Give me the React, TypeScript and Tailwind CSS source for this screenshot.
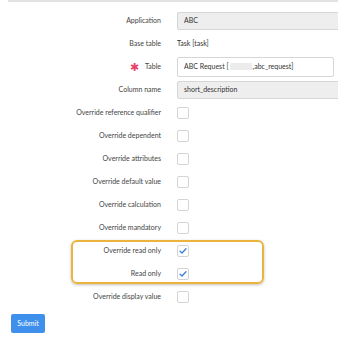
const font = { fontFamily: 'Lato, "Open Sans", sans-serif' };

const checkRows: { label: string; checked: boolean }[] = [
  { label: 'Override reference qualifier', checked: false },
  { label: 'Override dependent', checked: false },
  { label: 'Override attributes', checked: false },
  { label: 'Override default value', checked: false },
  { label: 'Override calculation', checked: false },
  { label: 'Override mandatory', checked: false },
  { label: 'Override read only', checked: true },
  { label: 'Read only', checked: true },
  { label: 'Override display value', checked: false },
];

function Row({ label, children, required }: { label: string; children: React.ReactNode; required?: boolean }) {
  return (
    <div className="flex h-[23px] items-center">
      <div className="flex w-[161px] shrink-0 items-center justify-end gap-[6px] text-[7px] text-[#444]">
        {required && <span className="text-[11px] leading-none text-[#e8416b]">✱</span>}
        <span>{label}</span>
      </div>
      <div className="ml-[16px] flex min-w-0 flex-1 items-center">{children}</div>
    </div>
  );
}

function Box({ checked }: { checked: boolean }) {
  return (
    <div className="flex h-[12px] w-[12px] items-center justify-center rounded-[2px] border border-[#d4d4d4] bg-white">
      {checked && (
        <svg width="8" height="8" viewBox="0 0 8 8" fill="none">
          <polyline points="1,4.2 3,6 7,1.8" stroke="#3b7fd8" strokeWidth="1.3" strokeLinecap="round" strokeLinejoin="round" />
        </svg>
      )}
    </div>
  );
}

export default function App() {
  return (
    <div className="relative h-[338px] w-[338px] overflow-hidden bg-white" style={font}>
      <div className="ml-2 h-[2px] bg-[#e2e2e2]" />
      <div className="pt-[7px]">
        <Row label="Application">
          <div className="flex h-[18px] w-[180px] shrink-0 items-center rounded-[2px] border border-[#d6d6d6] bg-[#eeeeee] px-[6px] text-[7px] text-[#333]">
            ABC
          </div>
        </Row>
        <Row label="Base table">
          <span className="text-[7px] text-[#333]">Task [task]</span>
        </Row>
        <Row label="Table" required>
          <div className="flex h-[20px] w-[157px] shrink-0 items-center rounded-[2px] border border-[#d6d6d6] bg-white px-[6px] text-[7px] text-[#333]">
            ABC Request [<span className="mx-[1px] inline-block h-[7px] w-[22px] bg-[#ececec]" />,abc_request]
          </div>
        </Row>
        <Row label="Column name">
          <div className="flex h-[18px] w-[180px] shrink-0 items-center rounded-[2px] border border-[#d6d6d6] bg-[#eeeeee] px-[6px] text-[7px] text-[#333]">
            short_description
          </div>
        </Row>
        {checkRows.map((r) => (
          <Row key={r.label} label={r.label}>
            <Box checked={r.checked} />
          </Row>
        ))}
      </div>
      <button className="ml-[11px] mt-[5px] h-[19px] w-[34px] rounded-[2px] bg-[#3f8fec] text-[7px] text-white">
        Submit
      </button>
      {/* highlight annotation */}
      <div className="absolute left-[71px] top-[240px] h-[44px] w-[193px] rounded-[6px] border-2 border-[#ebb53d] shadow-[0_1px_3px_rgba(0,0,0,0.25)]" />
    </div>
  );
}
